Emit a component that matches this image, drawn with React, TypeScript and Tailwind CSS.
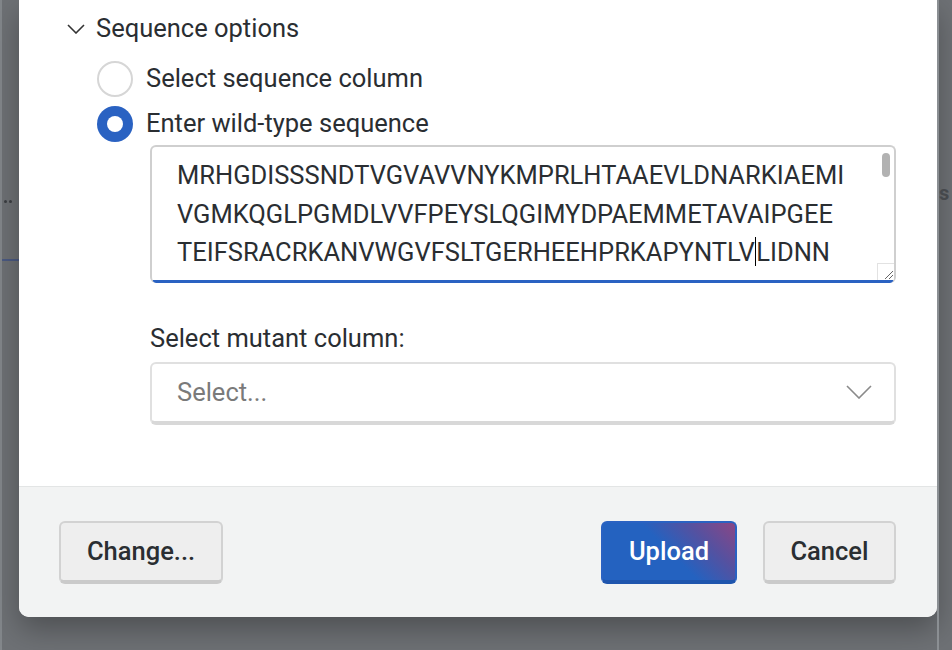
import React from "react";

const font = { fontFamily: "Roboto, 'Liberation Sans', sans-serif" };

function Radio({ checked }: { checked: boolean }) {
  if (checked) {
    return (
      <div className="w-[36px] h-[36px] rounded-full bg-[#2a62c2] flex items-center justify-center shrink-0">
        <div className="w-[16px] h-[16px] rounded-full bg-white" />
      </div>
    );
  }
  return <div className="w-[36px] h-[36px] rounded-full border-2 border-[#d6d6d6] bg-white shrink-0" />;
}

export default function App() {
  return (
    <div className="w-[952px] h-[650px] bg-[#6e7175] flex overflow-hidden text-[#2a2e32]" style={font}>
      {/* left background strip */}
      <div className="w-[19px] shrink-0 flex flex-col border-l-2 border-[#83878b]">
        <div className="h-[200px]" />
        <div className="flex gap-[2px] pl-[2px]">
          <div className="w-[3px] h-[3px] rounded-full bg-[#3b3e42]" />
          <div className="w-[3px] h-[3px] rounded-full bg-[#3b3e42]" />
        </div>
        <div className="h-[56px]" />
        <div className="h-[2px] bg-[#4b5a82]" />
      </div>

      {/* dialog */}
      <div className="w-[918px] h-[617px] shrink-0 bg-white rounded-b-[10px] flex flex-col overflow-hidden shadow-[0_12px_30px_rgba(0,0,0,0.3)]">
        <div className="h-[486px] shrink-0 flex flex-col">
          <div className="h-[11px]" />
          <div className="h-[36px] flex items-center pl-[48px]">
            <svg width="18" height="10" viewBox="0 0 18 10" className="mr-[11px]">
              <polyline points="1,1 9,9 17,1" fill="none" stroke="#333" strokeWidth="1.6" />
            </svg>
            <span className="text-[25.5px] leading-none">Sequence options</span>
          </div>
          <div className="h-[12px]" />
          <div className="h-[40px] flex items-center pl-[78px]">
            <Radio checked={false} />
            <span className="ml-[13px] text-[25.5px] leading-none">Select sequence column</span>
          </div>
          <div className="h-[5px]" />
          <div className="h-[40px] flex items-center pl-[78px]">
            <Radio checked={true} />
            <span className="ml-[13px] text-[25.5px] leading-none">Enter wild-type sequence</span>
          </div>
          <div className="h-[1px]" />
          <div className="ml-[131px] w-[746px] h-[138px] relative rounded-[6px] border-2 border-[#cfcfcf] border-b-0 overflow-hidden">
            <div className="pl-[25px] pt-[9px] text-[25.5px] leading-[38.5px] text-[#2a2e32] whitespace-nowrap">
              <div>MRHGDISSSNDTVGVAVVNYKMPRLHTAAEVLDNARKIAEMI</div>
              <div>VGMKQGLPGMDLVVFPEYSLQGIMYDPAEMMETAVAIPGEE</div>
              <div>
                TEIFSRACRKANVWGVFSLTGERHEEHPRKAPYNTLV
                <span className="inline-block w-[1.5px] h-[29px] bg-black align-[-5px]" />
                LIDNN
              </div>
            </div>
            <div className="absolute right-[4px] top-[6px] w-[8px] h-[24px] rounded-full bg-[#b2b2b2]" />
            <div className="absolute right-0 bottom-[3px] w-[17px] h-[17px] bg-white border-l border-t border-[#e2e2e2] flex items-end justify-end">
              <svg width="12" height="12" viewBox="0 0 12 12">
                <line x1="3" y1="11" x2="11" y2="3" stroke="#666" strokeWidth="1" />
                <line x1="7" y1="11" x2="11" y2="7" stroke="#666" strokeWidth="1" />
              </svg>
            </div>
            <div className="absolute left-0 right-0 bottom-0 h-[3px] bg-[#2a62c2]" />
          </div>
          <div className="h-[43px]" />
          <div className="pl-[131px] text-[25.5px] leading-none">Select mutant column:</div>
          <div className="h-[10px]" />
          <div className="ml-[131px] w-[746px] h-[63px] rounded-[6px] border-2 border-[#e0e0e0] border-b-[4px] border-b-[#d8d8d8] flex items-center justify-between pl-[25px] pr-[22px]">
            <span className="text-[25.5px] leading-none text-[#7a7a7a] pt-[2px]">Select...</span>
            <svg width="26" height="14" viewBox="0 0 26 14">
              <polyline points="1,1 13,13 25,1" fill="none" stroke="#8a8a8a" strokeWidth="1.6" />
            </svg>
          </div>
        </div>

        {/* footer */}
        <div className="flex-1 border-t border-[#e3e5e5] bg-[#f2f3f3] flex items-center justify-between pl-[40px] pr-[41px]">
          <button className="w-[164px] h-[63px] rounded-[6px] bg-[#eeeeee] border-2 border-[#d2d2d2] border-b-[4px] border-b-[#cacaca] text-[25.5px] font-medium text-[#2a2e32]">
            Change...
          </button>
          <div className="flex gap-[26px]">
            <button className="w-[136px] h-[63px] rounded-[6px] bg-[linear-gradient(225deg,#8a4685_0%,#5551a0_25%,#2462c0_50%,#2462c0_100%)] border-2 border-[#2a62c2] border-b-[4px] border-b-[#1f55ad] text-[25.5px] font-medium text-white">
              Upload
            </button>
            <button className="w-[133px] h-[63px] rounded-[6px] bg-[#eeeeee] border-2 border-[#d2d2d2] border-b-[4px] border-b-[#cacaca] text-[25.5px] font-medium text-[#2a2e32]">
              Cancel
            </button>
          </div>
        </div>
      </div>

      {/* right background strip */}
      <div className="flex-1 flex flex-col border-l-2 border-[#8b8f93] overflow-hidden">
        <div className="h-[183px]" />
        <span className="text-[20px] font-bold text-[#45484c] leading-none">s</span>
      </div>
    </div>
  );
}
